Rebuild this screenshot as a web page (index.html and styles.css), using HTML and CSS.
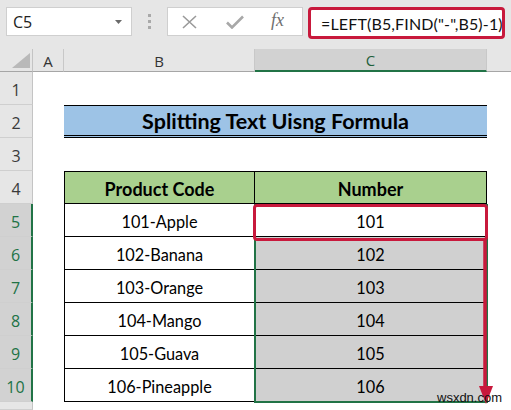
FILE: index.html
```html
<!DOCTYPE html>
<html>
<head>
<meta charset="utf-8">
<link rel="stylesheet" href="styles.css">
</head>
<body>
<div class="app">
  <div class="toolbar">
    <div class="namebox">
      <span class="ref">C5</span>
      <svg class="dd" width="7" height="4" viewBox="0 0 7 4"><path d="M0 0H7L3.5 4Z" fill="#6a6a6a"/></svg>
    </div>
    <div class="grip"><i></i><i></i><i></i></div>
    <div class="fxbox">
      <svg class="ico-x" width="15" height="14" viewBox="0 0 15 14"><path d="M1 1L14 13M14 1L1 13" stroke="#9a9a9a" stroke-width="1.6" fill="none"/></svg>
      <svg class="ico-ok" width="18" height="14" viewBox="0 0 18 14"><path d="M1 7.5L6 12.5L17 1.5" stroke="#a8a8a8" stroke-width="2.6" fill="none"/></svg>
      <span class="fx">fx</span>
    </div>
    <div class="formula">=LEFT(B5,FIND("-",B5)-1)</div>
  </div>

  <div class="sheet">
    <div class="row hdr">
      <div class="corner"><svg width="18" height="15" viewBox="0 0 18 15"><path d="M18 0V15H0Z" fill="#b9b9b9"/></svg></div>
      <div class="ch">A</div>
      <div class="ch">B</div>
      <div class="ch sel">C</div>
      <div class="ch last"></div>
    </div>

    <div class="row">
      <div class="rh">1</div><div></div><div></div><div></div><div></div>
    </div>
    <div class="row">
      <div class="rh">2</div><div></div><div class="title">Splitting Text Uisng Formula</div><div></div>
    </div>
    <div class="row">
      <div class="rh">3</div><div></div><div></div><div></div><div></div>
    </div>
    <div class="row">
      <div class="rh">4</div><div></div><div class="th first">Product Code</div><div class="th">Number</div><div></div>
    </div>
    <div class="row">
      <div class="rh on">5</div><div></div><div class="td first">101-Apple</div><div class="td">101</div><div></div>
    </div>
    <div class="row">
      <div class="rh on">6</div><div></div><div class="td first">102-Banana</div><div class="td fill">102</div><div></div>
    </div>
    <div class="row">
      <div class="rh on">7</div><div></div><div class="td first">103-Orange</div><div class="td fill">103</div><div></div>
    </div>
    <div class="row">
      <div class="rh on">8</div><div></div><div class="td first">104-Mango</div><div class="td fill">104</div><div></div>
    </div>
    <div class="row">
      <div class="rh on">9</div><div></div><div class="td first">105-Guava</div><div class="td fill">105</div><div></div>
    </div>
    <div class="row">
      <div class="rh on">10</div><div></div><div class="td first">106-Pineapple</div><div class="td fill">106</div><div></div>
    </div>
    <div class="row tail">
      <div class="rh"></div><div></div><div></div><div></div><div></div>
    </div>

    <div class="selection"></div>
    <div class="callout"></div>
    <svg class="arrow" width="20" height="166" viewBox="0 0 20 166"><path d="M9 0V150" stroke="#c8193c" stroke-width="3.5"/><path d="M3 146H17L10 164Z" fill="#c8193c"/></svg>
  </div>
  <div class="mark">wsxdn.com</div>
</div>
</body>
</html>
```

FILE: styles.css
```css
* { box-sizing: border-box; }
html, body { margin: 0; padding: 0; }
body {
  width: 511px;
  height: 410px;
  overflow: hidden;
  background: #e6e6e6;
  font-family: Lato, "Liberation Sans", sans-serif;
  color: #000;
}
.app { position: relative; width: 511px; height: 410px; }

/* formula bar */
.toolbar {
  height: 49px;
  display: flex;
  align-items: flex-start;
  padding: 7px 0 0 6px;
  background: #e6e6e6;
}
.namebox {
  width: 126px;
  height: 29px;
  background: #fff;
  border: 1px solid #cfcfcf;
  display: flex;
  align-items: center;
  justify-content: space-between;
  padding: 0 9px 0 6px;
  font-family: "Open Sans", sans-serif;
  font-size: 16px;
  color: #222;
}
.grip {
  margin: 7px 0 0 16px;
  display: flex;
  flex-direction: column;
  gap: 3px;
}
.grip i { display: block; width: 3px; height: 3px; background: #a9a9a9; }
.fxbox {
  margin-left: 16px;
  width: 136px;
  height: 29px;
  background: #fff;
  border: 1px solid #cfcfcf;
  display: flex;
  align-items: center;
  padding-left: 14px;
}
.ico-x { margin-right: 29px; }
.ico-ok { margin-right: 27px; }
.fx {
  font-family: "Liberation Serif", serif;
  font-style: italic;
  font-size: 18px;
  color: #6f6f6f;
  margin-top: -2px;
}
.formula {
  margin-left: 5px;
  width: 197px;
  height: 32px;
  background: #fff;
  border: 3px solid #c8193c;
  border-radius: 4px;
  padding-left: 10px;
  display: flex;
  align-items: center;
  font-family: Lato, sans-serif;
  font-size: 16px;
  letter-spacing: 0.15px;
  color: #111;
  white-space: nowrap;
  overflow: hidden;
}

/* sheet */
.sheet { position: relative; }
.row {
  display: grid;
  grid-template-columns: 33px 31px 191px 232px 1fr;
  height: 33px;
  background: #fff;
}
.row.hdr { height: 23px; background: #e6e6e6; }
.row.tail { height: 8px; }

.corner {
  border-right: 1px solid #c4c4c4;
  border-bottom: 1px solid #a6a6a6;
  display: flex;
  align-items: flex-end;
  justify-content: flex-end;
  padding: 0 2px 3px 0;
}
.ch {
  border-right: 1px solid #c8c8c8;
  border-bottom: 1px solid #a6a6a6;
  display: flex;
  align-items: center;
  justify-content: center;
  font-family: "Open Sans", sans-serif;
  font-size: 15px;
  color: #333;
  padding-top: 1px;
}
.ch.sel {
  background: #d2d2d2;
  border-bottom: 2px solid #217346;
  color: #1f5f3a;
}
.ch.last { border-right: none; }

.rh {
  background: #e6e6e6;
  border-right: 1px solid #c4c4c4;
  border-bottom: 1px solid #cfcfcf;
  display: flex;
  align-items: flex-end;
  justify-content: center;
  padding-bottom: 3px;
  font-family: "Open Sans", sans-serif;
  font-size: 16px;
  color: #3a3a3a;
}
.rh.on {
  background: #d2d2d2;
  border-right: 2px solid #217346;
  color: #217346;
}

.title {
  grid-column: span 2;
  background: #9dc3e6;
  border-top: 1px solid #000;
  border-bottom: 3px double #000;
  display: flex;
  align-items: center;
  justify-content: center;
  font-weight: 700;
  font-size: 21.5px;
  padding-top: 1px;
}
.th, .td {
  border-right: 1px solid #000;
  border-bottom: 1px solid #000;
  display: flex;
  align-items: center;
  justify-content: center;
  font-size: 16.3px;
  padding-top: 2px;
}
.th {
  background: #a9d08e;
  border-top: 1px solid #000;
  font-weight: 700;
  font-size: 18px;
}
.first { border-left: 1px solid #000; }
.td.fill { background: #d0d0d0; }

/* overlays */
.selection {
  position: absolute;
  left: 254px;
  top: 155px;
  width: 234px;
  height: 199px;
  border: 2px solid #217346;
}
.callout {
  position: absolute;
  left: 253px;
  top: 155px;
  width: 235px;
  height: 37px;
  border: 3px solid #c8193c;
  border-radius: 4px;
}
.arrow {
  position: absolute;
  left: 476px;
  top: 191px;
}
.mark {
  position: absolute;
  left: 437px;
  top: 390px;
  font-family: "Liberation Sans", sans-serif;
  font-size: 13px;
  color: #111;
}
```
